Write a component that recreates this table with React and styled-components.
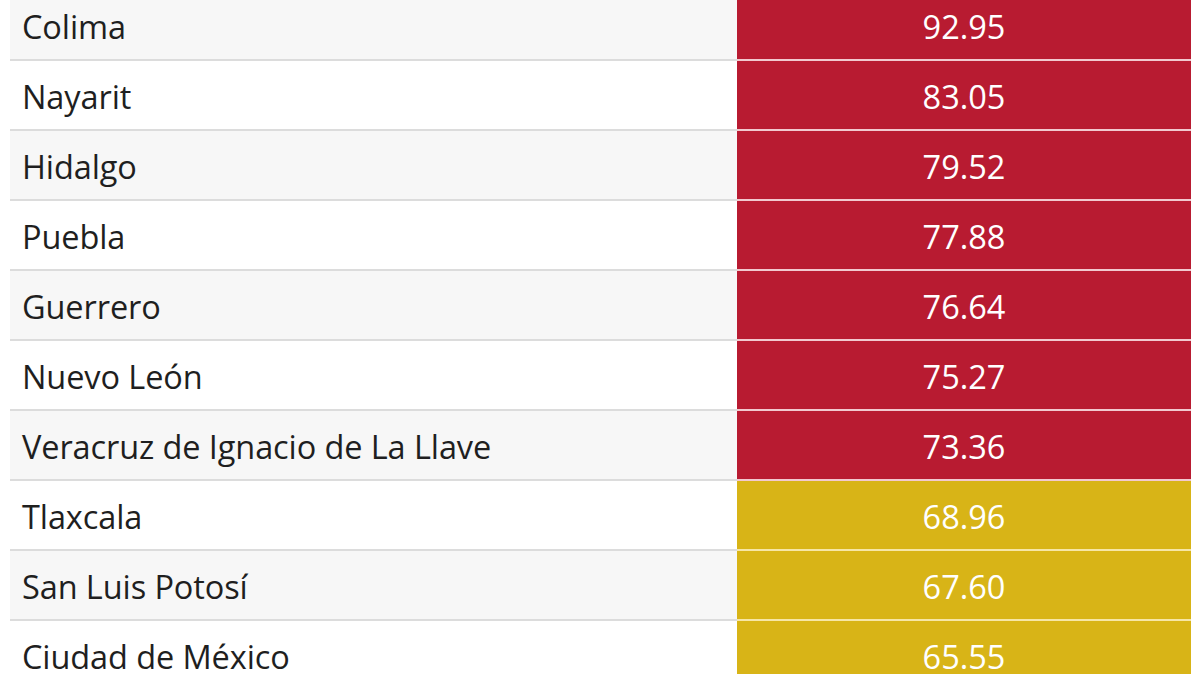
import React from 'react';
import styled, { createGlobalStyle } from 'styled-components';

const GlobalStyle = createGlobalStyle`
  html, body {
    margin: 0;
    padding: 0;
    background: #ffffff;
    overflow: hidden;
  }
  body {
    font-family: 'Open Sans', 'Noto Sans', sans-serif;
  }
`;

const Page = styled.div`
  width: 1200px;
  height: 674px;
  overflow: hidden;
  padding: 0 9px 0 10px;
  box-sizing: border-box;
`;

const Table = styled.div`
  display: flex;
  flex-direction: column;
  margin-top: -9px;
`;

const Row = styled.div`
  display: grid;
  grid-template-columns: 727px 1fr;
  height: 70px;
  box-sizing: border-box;
`;

const NameCell = styled.div`
  display: flex;
  align-items: center;
  padding: 3px 0 0 12px;
  font-size: 32.5px;
  letter-spacing: -0.1px;
  color: #1f1f1f;
  background: ${p => (p.$shaded ? '#f7f7f7' : '#ffffff')};
  border-bottom: 2px solid #dcdcdc;
`;

const ValueCell = styled.div`
  display: flex;
  align-items: center;
  justify-content: center;
  padding-top: 3px;
  font-size: 32.5px;
  color: #ffffff;
  background: ${p => (p.$level === 'high' ? '#b81b31' : '#d8b417')};
  border-bottom: 2px solid ${p => (p.$level === 'high' ? '#f2c9cf' : '#f6e6a6')};
`;

const rows = [
  ['Colima', '92.95', 'high'],
  ['Nayarit', '83.05', 'high'],
  ['Hidalgo', '79.52', 'high'],
  ['Puebla', '77.88', 'high'],
  ['Guerrero', '76.64', 'high'],
  ['Nuevo León', '75.27', 'high'],
  ['Veracruz de Ignacio de La Llave', '73.36', 'high'],
  ['Tlaxcala', '68.96', 'mid'],
  ['San Luis Potosí', '67.60', 'mid'],
  ['Ciudad de México', '65.55', 'mid'],
];

export default function App() {
  return (
    <Page>
      <GlobalStyle />
      <Table>
        {rows.map(([name, value, level], i) => (
          <Row key={name}>
            <NameCell $shaded={i % 2 === 0}>{name}</NameCell>
            <ValueCell $level={level}>{value}</ValueCell>
          </Row>
        ))}
      </Table>
    </Page>
  );
}
